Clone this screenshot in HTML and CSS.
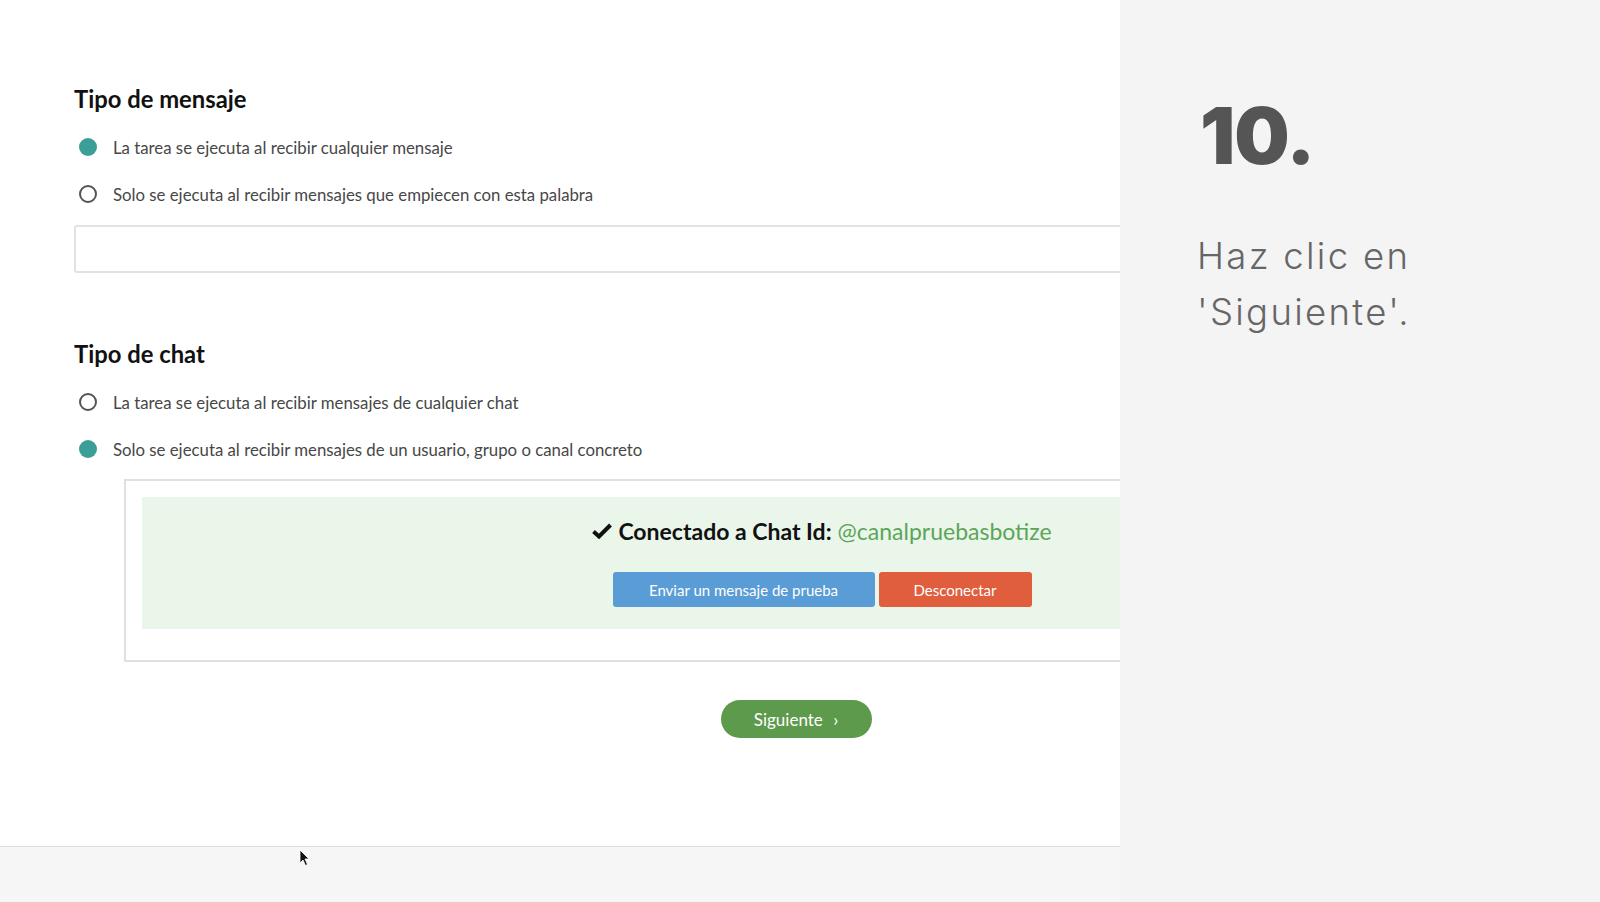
FILE: index.html
```html
<!DOCTYPE html>
<html lang="es">
<head>
<meta charset="utf-8">
<title>Tipo de mensaje</title>
<link rel="stylesheet" href="styles.css">
</head>
<body>
<div class="page">
  <main class="content">
    <h2 class="section-title">Tipo de mensaje</h2>
    <div class="radio-row first">
      <span class="radio checked"></span>
      <span class="radio-label">La tarea se ejecuta al recibir cualquier mensaje</span>
    </div>
    <div class="radio-row">
      <span class="radio"></span>
      <span class="radio-label">Solo se ejecuta al recibir mensajes que empiecen con esta palabra</span>
    </div>
    <div class="text-input"></div>

    <h2 class="section-title second">Tipo de chat</h2>
    <div class="radio-row first">
      <span class="radio"></span>
      <span class="radio-label">La tarea se ejecuta al recibir mensajes de cualquier chat</span>
    </div>
    <div class="radio-row">
      <span class="radio checked"></span>
      <span class="radio-label">Solo se ejecuta al recibir mensajes de un usuario, grupo o canal concreto</span>
    </div>

    <div class="chat-box">
      <div class="connected">
        <div class="connected-title">
          <svg class="check" viewBox="0 0 20 16" width="20" height="16"><path d="M1.5 8.5 L7 13.5 L18.5 2" fill="none" stroke="#111" stroke-width="4" stroke-linejoin="miter"/></svg>
          <span class="bold">Conectado a Chat Id:</span>
          <span class="chat-id">@canalpruebasbotize</span>
        </div>
        <div class="btn-row">
          <button class="btn btn-blue">Enviar un mensaje de prueba</button>
          <button class="btn btn-red">Desconectar</button>
        </div>
      </div>
    </div>

    <div class="next-row">
      <button class="btn-next">Siguiente <span class="chev">&rsaquo;</span></button>
    </div>
  </main>

  <footer class="bottom-bar"></footer>

  <aside class="step-panel">
    <div class="step-number">10.</div>
    <p class="step-text">Haz clic en<br>'Siguiente'.</p>
  </aside>

  <svg class="cursor" viewBox="0 0 12 18" width="12" height="18"><path d="M1 1 L1 14 L4 11 L6.5 16.5 L8.5 15.5 L6 10 L10 10 Z" fill="#111" stroke="#fff" stroke-width="0.8"/></svg>
</div>
</body>
</html>
```

FILE: styles.css
```css
html, body {
  margin: 0;
  padding: 0;
  background: #ffffff;
}

body {
  font-family: Lato, "Open Sans", "Liberation Sans", sans-serif;
  color: #444;
}

.page {
  position: relative;
  width: 1600px;
  height: 902px;
  overflow: hidden;
  display: flex;
  flex-direction: column;
}

.content {
  flex: 1;
  padding: 85px 82px 0 74px;
  display: flex;
  flex-direction: column;
}

.section-title {
  margin: 0;
  font-size: 23.8px;
  line-height: 28px;
  font-weight: 700;
  color: #111;
}

.section-title.second {
  margin-top: 67px;
}

.radio-row {
  display: flex;
  align-items: center;
  height: 24px;
  margin-top: 23px;
  padding-left: 5px;
}

.radio-row.first {
  margin-top: 22px;
}

.radio {
  width: 18px;
  height: 18px;
  box-sizing: border-box;
  border-radius: 50%;
  border: 2px solid #555;
  flex: none;
}

.radio.checked {
  border: none;
  background: #3b9f97;
}

.radio-label {
  margin-left: 16px;
  font-size: 16.8px;
  color: #474747;
}

.text-input {
  margin-top: 19px;
  height: 48px;
  box-sizing: border-box;
  border: 2px solid #e2e2e2;
  border-radius: 3px;
}

.chat-box {
  margin: 18px 0 0 50px;
  height: 183px;
  box-sizing: border-box;
  border: 2px solid #e0e0e0;
  padding: 16px 14px 0 16px;
}

.connected {
  background: #eaf6e9;
  height: 132px;
  box-sizing: border-box;
  padding-top: 19px;
  display: flex;
  flex-direction: column;
  align-items: center;
}

.connected-title {
  display: flex;
  align-items: center;
  height: 30px;
  font-size: 23px;
  color: #111;
}

.check {
  margin-right: 6px;
}

.bold {
  font-weight: 700;
}

.chat-id {
  margin-left: 6px;
  color: #5ca55a;
}

.btn-row {
  margin-top: 26px;
  display: flex;
  gap: 4px;
}

.btn {
  height: 35px;
  border: none;
  border-radius: 3px;
  color: #fff;
  font-family: Lato, "Open Sans", sans-serif;
  font-size: 15px;
  padding: 0;
}

.btn-blue {
  width: 262px;
  background: #5a9cd6;
}

.btn-red {
  width: 153px;
  background: #e05d3d;
}

.next-row {
  margin-top: 38px;
  display: flex;
  justify-content: center;
}

.btn-next {
  width: 151px;
  height: 38px;
  border: none;
  border-radius: 19px;
  background: #5e9a4c;
  color: #fff;
  font-family: Lato, "Open Sans", sans-serif;
  font-size: 17px;
  padding: 0;
}

.chev {
  margin-left: 6px;
  font-size: 18px;
}

.bottom-bar {
  height: 55px;
  flex: none;
  background: #f6f6f6;
  border-top: 1px solid #dcdcdc;
}

.step-panel {
  position: absolute;
  top: 0;
  right: 0;
  width: 480px;
  height: 902px;
  box-sizing: border-box;
  padding: 94px 0 0 80px;
  background: rgba(244, 244, 244, 0.965);
}

.step-number {
  font-family: Inter, "Open Sans", sans-serif;
  font-weight: 900;
  font-size: 78px;
  line-height: 84px;
  letter-spacing: -1px;
  color: #555;
}

.step-text {
  margin: 50px 0 0 -3px;
  font-family: Inter, "Open Sans", sans-serif;
  font-weight: 300;
  font-size: 36.5px;
  line-height: 56px;
  letter-spacing: 2.3px;
  color: #666;
}

.cursor {
  position: absolute;
  left: 299px;
  top: 849px;
}
```
